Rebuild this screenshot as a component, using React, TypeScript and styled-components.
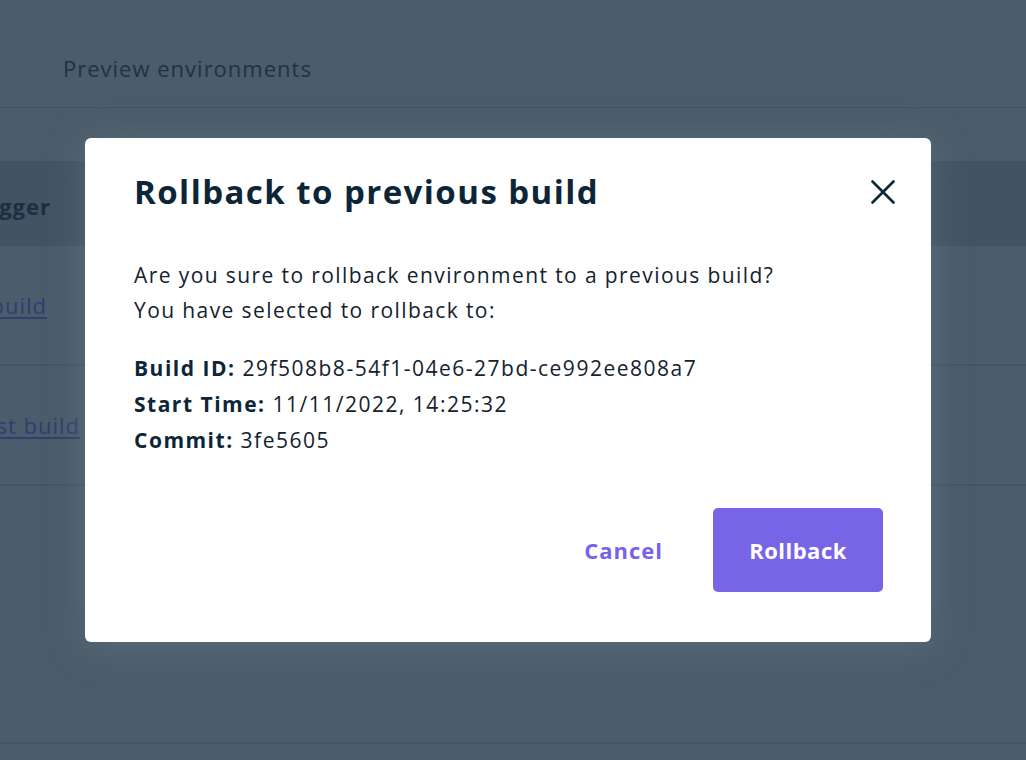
import React from "react";
import styled, { createGlobalStyle } from "styled-components";

const Global = createGlobalStyle`
  html, body { margin: 0; padding: 0; }
  body {
    width: 1026px;
    height: 760px;
    overflow: hidden;
    background: #4b5c6a;
    font-family: "Open Sans", "Noto Sans", Arial, sans-serif;
  }
`;

const Page = styled.div`
  position: relative;
  width: 1026px;
  height: 760px;
  display: flex;
  flex-direction: column;
  background: #4b5c6a;
`;

const TabBar = styled.div`
  height: 108px;
  border-bottom: 1px solid #3e5467;
  display: flex;
  align-items: center;
  padding-left: 63px;
  box-sizing: border-box;
`;

const Tab = styled.span`
  font-size: 22px;
  letter-spacing: 1px;
  color: #1d3446;
  margin-top: 28px;
`;

const Table = styled.div`
  margin-top: 53px;
  display: flex;
  flex-direction: column;
`;

const HeaderRow = styled.div`
  height: 85px;
  background: #415463;
  display: flex;
  align-items: center;
`;

const Row = styled.div`
  height: 120px;
  border-bottom: 2px solid #425566;
  box-sizing: border-box;
  display: flex;
  align-items: center;
`;

const Cell = styled.div<{ $end: number }>`
  width: ${(p) => p.$end}px;
  display: flex;
  justify-content: flex-end;
  white-space: nowrap;
`;

const HeaderText = styled.span`
  font-size: 22px;
  font-weight: 700;
  letter-spacing: 1px;
  color: #1b2f40;
  margin-top: 4px;
`;

const RowLink = styled.a`
  font-size: 22px;
  letter-spacing: 1px;
  color: #2f3e73;
  text-decoration: underline;
  text-underline-offset: 3px;
`;

const Spacer = styled.div`
  flex: 1;
`;

const BottomLine = styled.div`
  height: 2px;
  background: #425566;
  margin-bottom: 16px;
`;

const Modal = styled.div`
  position: absolute;
  left: 85px;
  top: 138px;
  width: 846px;
  height: 504px;
  box-sizing: border-box;
  background: #ffffff;
  border-radius: 6px;
  box-shadow: 0 4px 40px rgba(120, 140, 150, 0.35);
  padding: 26px 48px 50px 49px;
  display: flex;
  flex-direction: column;
  color: #0e2638;
`;

const ModalHeader = styled.div`
  display: flex;
  align-items: center;
  justify-content: space-between;
`;

const Title = styled.h2`
  margin: 0;
  font-size: 33px;
  line-height: 56px;
  font-weight: 700;
  color: #0c2638;
  letter-spacing: 1.45px;
`;

const CloseButton = styled.button`
  border: none;
  background: none;
  padding: 0;
  margin-right: -12px;
  width: 24px;
  height: 24px;
  display: flex;
  align-items: center;
  justify-content: center;
  cursor: pointer;
`;

const Body = styled.div`
  margin-top: 38px;
  font-size: 21px;
  line-height: 35px;
  letter-spacing: 1.4px;
  color: #13222e;
`;

const Paragraph = styled.p`
  margin: 0;
`;

const Details = styled.div`
  margin-top: 22px;
  font-size: 21px;
  line-height: 36px;
  letter-spacing: 1.5px;
  color: #13222e;
`;

const DetailLine = styled.div``;

const Label = styled.strong`
  font-weight: 700;
  color: #0c2638;
`;

const Footer = styled.div`
  margin-top: auto;
  display: flex;
  justify-content: flex-end;
  align-items: center;
  gap: 26px;
`;

const TextButton = styled.button`
  border: none;
  background: none;
  font-family: inherit;
  font-size: 22px;
  font-weight: 700;
  letter-spacing: 1px;
  color: #7863e8;
  padding: 0 24px;
  height: 84px;
  cursor: pointer;
`;

const PrimaryButton = styled.button`
  border: none;
  border-radius: 5px;
  background: #7864e6;
  color: #ffffff;
  font-family: inherit;
  font-size: 22px;
  font-weight: 700;
  letter-spacing: 0.5px;
  width: 170px;
  height: 84px;
  cursor: pointer;
`;

export default function App() {
  return (
    <>
      <Global />
      <Page>
        <TabBar>
          <Tab>Preview environments</Tab>
        </TabBar>
        <Table>
          <HeaderRow>
            <Cell $end={51}>
              <HeaderText>Trigger</HeaderText>
            </Cell>
          </HeaderRow>
          <Row>
            <Cell $end={47}>
              <RowLink>Manual build</RowLink>
            </Cell>
          </Row>
          <Row>
            <Cell $end={80}>
              <RowLink>Rollback test build</RowLink>
            </Cell>
          </Row>
        </Table>
        <Spacer />
        <BottomLine />
        <Modal role="dialog">
          <ModalHeader>
            <Title>Rollback to previous build</Title>
            <CloseButton aria-label="Close">
              <svg width="24" height="24" viewBox="0 0 24 24">
                <path
                  d="M1.5 1.5 L22.5 22.5 M22.5 1.5 L1.5 22.5"
                  stroke="#0c2638"
                  strokeWidth="2.6"
                  strokeLinecap="round"
                  fill="none"
                />
              </svg>
            </CloseButton>
          </ModalHeader>
          <Body>
            <Paragraph>Are you sure to rollback environment to a previous build?</Paragraph>
            <Paragraph>You have selected to rollback to:</Paragraph>
          </Body>
          <Details>
            <DetailLine>
              <Label>Build ID:</Label> 29f508b8-54f1-04e6-27bd-ce992ee808a7
            </DetailLine>
            <DetailLine>
              <Label>Start Time:</Label> 11/11/2022, 14:25:32
            </DetailLine>
            <DetailLine>
              <Label>Commit:</Label> 3fe5605
            </DetailLine>
          </Details>
          <Footer>
            <TextButton>Cancel</TextButton>
            <PrimaryButton>Rollback</PrimaryButton>
          </Footer>
        </Modal>
      </Page>
    </>
  );
}
